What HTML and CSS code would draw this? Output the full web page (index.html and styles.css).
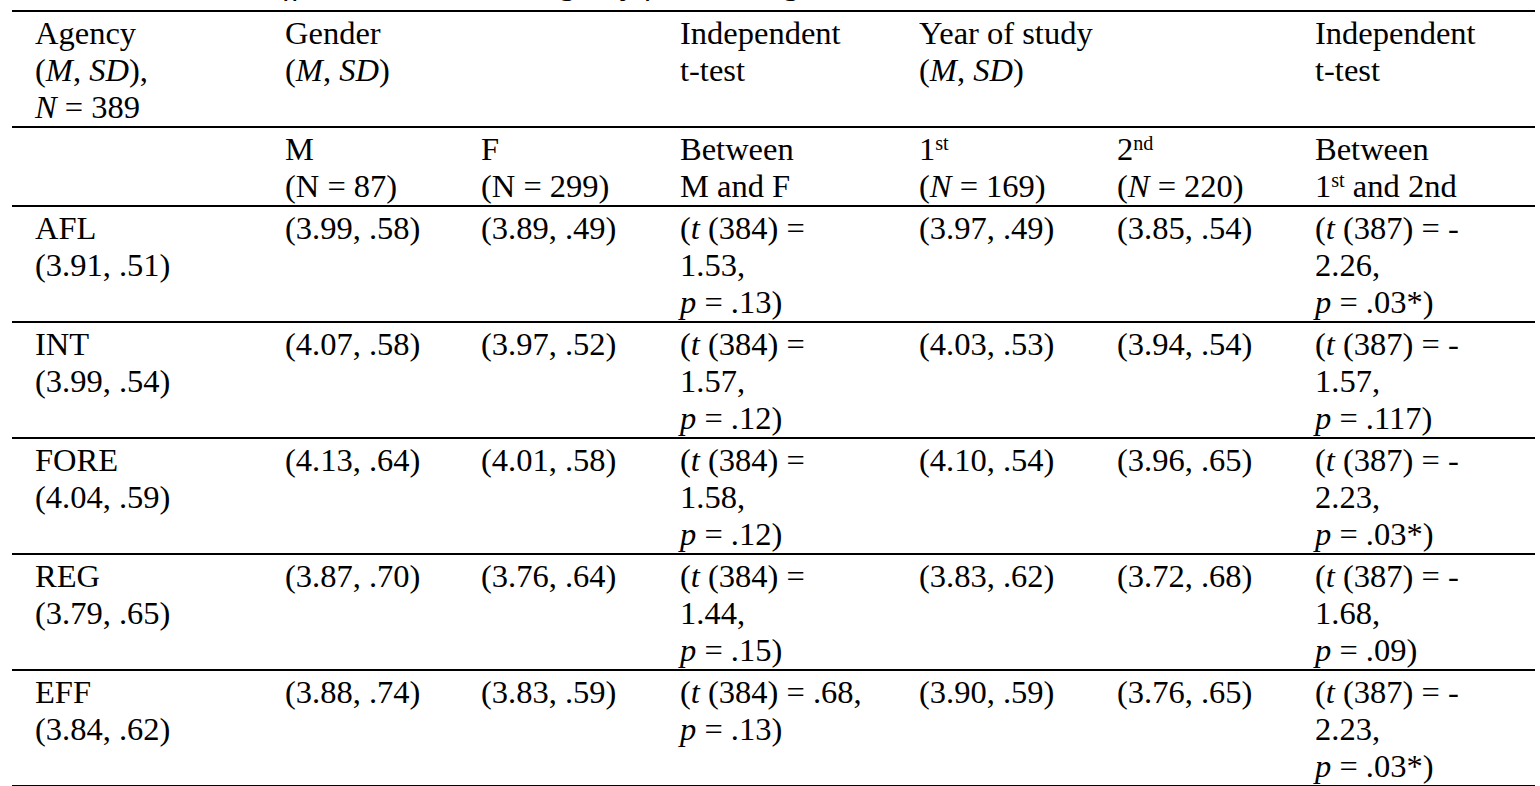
FILE: index.html
```html
<!DOCTYPE html>
<html lang="en">
<head>
<meta charset="utf-8">
<title>Agency table</title>
<link rel="stylesheet" href="styles.css">
</head>
<body>
<div class="page">
  <p class="caption">Table 2. Mean differences in learner agency for learning</p>
  <table class="stats">
    <colgroup>
      <col class="w1"><col class="w2"><col class="w3"><col class="w4"><col class="w5"><col class="w6"><col class="w7">
    </colgroup>
    <thead>
      <tr>
        <th>Agency<br>(<i>M</i>, <i>SD</i>),<br><i>N</i> = 389</th>
        <th colspan="2">Gender<br>(<i>M</i>, <i>SD</i>)</th>
        <th>Independent<br>t-test</th>
        <th colspan="2">Year of study<br>(<i>M</i>, <i>SD</i>)</th>
        <th>Independent<br>t-test</th>
      </tr>
      <tr>
        <th></th>
        <th>M<br>(N = 87)</th>
        <th>F<br>(N = 299)</th>
        <th>Between<br>M and F</th>
        <th>1<sup>st</sup><br>(<i>N</i> = 169)</th>
        <th>2<sup>nd</sup><br>(<i>N</i> = 220)</th>
        <th>Between<br>1<sup>st</sup> and 2nd</th>
      </tr>
    </thead>
    <tbody>
      <tr>
        <td>AFL<br>(3.91, .51)</td>
        <td>(3.99, .58)</td>
        <td>(3.89, .49)</td>
        <td>(<i>t</i> (384) =<br>1.53,<br><i>p</i> = .13)</td>
        <td>(3.97, .49)</td>
        <td>(3.85, .54)</td>
        <td>(<i>t</i> (387) = -<br>2.26,<br><i>p</i> = .03*)</td>
      </tr>
      <tr>
        <td>INT<br>(3.99, .54)</td>
        <td>(4.07, .58)</td>
        <td>(3.97, .52)</td>
        <td>(<i>t</i> (384) =<br>1.57,<br><i>p</i> = .12)</td>
        <td>(4.03, .53)</td>
        <td>(3.94, .54)</td>
        <td>(<i>t</i> (387) = -<br>1.57,<br><i>p</i> = .117)</td>
      </tr>
      <tr>
        <td>FORE<br>(4.04, .59)</td>
        <td>(4.13, .64)</td>
        <td>(4.01, .58)</td>
        <td>(<i>t</i> (384) =<br>1.58,<br><i>p</i> = .12)</td>
        <td>(4.10, .54)</td>
        <td>(3.96, .65)</td>
        <td>(<i>t</i> (387) = -<br>2.23,<br><i>p</i> = .03*)</td>
      </tr>
      <tr>
        <td>REG<br>(3.79, .65)</td>
        <td>(3.87, .70)</td>
        <td>(3.76, .64)</td>
        <td>(<i>t</i> (384) =<br>1.44,<br><i>p</i> = .15)</td>
        <td>(3.83, .62)</td>
        <td>(3.72, .68)</td>
        <td>(<i>t</i> (387) = -<br>1.68,<br><i>p</i> = .09)</td>
      </tr>
      <tr>
        <td>EFF<br>(3.84, .62)</td>
        <td>(3.88, .74)</td>
        <td>(3.83, .59)</td>
        <td>(<i>t</i> (384) = .68,<br><i>p</i> = .13)</td>
        <td>(3.90, .59)</td>
        <td>(3.76, .65)</td>
        <td>(<i>t</i> (387) = -<br>2.23,<br><i>p</i> = .03*)</td>
      </tr>
    </tbody>
  </table>
</div>
</body>
</html>
```

FILE: styles.css
```css
html, body {
  margin: 0;
  padding: 0;
  background: #ffffff;
}

body {
  font-family: "Liberation Serif", "Times New Roman", serif;
  font-size: 32.5px;
  line-height: 37px;
  color: #000000;
  overflow: hidden;
}

.page {
  padding-left: 12px;
}

.caption {
  margin: -35px 0 8px 0;
  padding-left: 53px;
  font-style: italic;
  white-space: nowrap;
}

.stats {
  border-collapse: collapse;
  table-layout: fixed;
  width: 1523px;
}

.w1 { width: 257px; }
.w2 { width: 196px; }
.w3 { width: 199px; }
.w4 { width: 239px; }
.w5 { width: 198px; }
.w6 { width: 198px; }
.w7 { width: 236px; }

.stats th,
.stats td {
  font-weight: normal;
  text-align: left;
  vertical-align: top;
  padding: 3px 0 0 16px;
  white-space: nowrap;
}

.stats th:first-child,
.stats td:first-child {
  padding-left: 23px;
}

.stats thead tr:first-child th {
  border-top: 2px solid #000;
}

.stats tr {
  border-bottom: 2px solid #000;
}

.stats sup {
  font-size: 0.62em;
  line-height: 0;
  vertical-align: 0.5em;
}
```
